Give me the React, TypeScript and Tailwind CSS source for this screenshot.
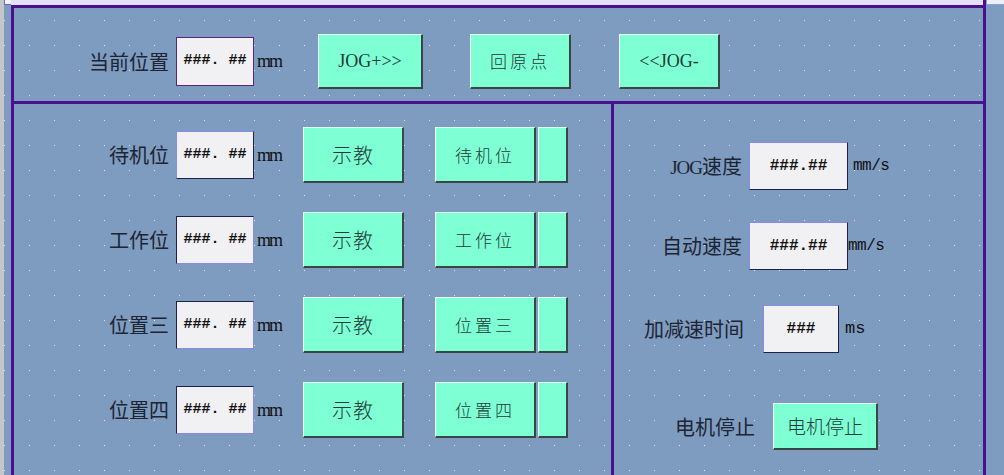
import React from "react";

const cjk = "font-['Noto_Sans_CJK_SC',sans-serif]";
const serif = "font-['Liberation_Serif','Noto_Sans_CJK_SC',serif]";
const mono = "font-['Liberation_Mono','Noto_Sans_CJK_SC',monospace]";

const Btn: React.FC<{ className?: string; children?: React.ReactNode }> = ({ className = "", children }) => (
  <div
    className={
      "flex items-center justify-center shrink-0 bg-[#7effd4] border-t border-l border-t-[#e6fff6] border-l-[#f4fffa] border-b-2 border-r-2 border-b-[#3a4644] border-r-[#3a4644] text-[#1f3b37] " +
      className
    }
  >
    {children}
  </div>
);

const Field: React.FC<{ className?: string; sunken?: boolean; text?: string; textClass?: string }> = ({
  className = "",
  sunken = false,
  text = "###.##",
  textClass = "text-[16px]",
}) => (
  <div
    className={
      "flex items-center justify-center shrink-0 bg-[#f1f0f3] border text-[#111] font-bold " +
      (sunken
        ? "border-t-[#20204e] border-l-[#20204e] border-b-[#8a8ae6] border-r-[#8a8ae6] "
        : "border-t-[#8a8ae6] border-l-[#8a8ae6] border-b-[#20204e] border-r-[#20204e] ") +
      mono +
      " " +
      textClass +
      " " +
      className
    }
  >
    <span className="whitespace-pre">{text}</span>
  </div>
);

const rows = [
  { label: "待机位", sunken: false },
  { label: "工作位", sunken: true },
  { label: "位置三", sunken: true },
  { label: "位置四", sunken: true },
];

export default function App() {
  return (
    <div
      className={
        "w-[1004px] h-[475px] overflow-hidden flex bg-[#7e9cc0] bg-[image:linear-gradient(to_right,transparent_1px,#7e9cc0_1px),linear-gradient(to_bottom,#e2e9f3_1px,#7e9cc0_1px)] bg-[length:25px_25px] bg-[position:4px_20px] " +
        cjk
      }
    >
      <div className="w-[4px] h-full shrink-0 bg-[#c6c6ca]" />
      <div className="flex-1 flex flex-col">
        {/* top strip */}
        <div className="h-[5px] shrink-0 flex bg-[#e4e0f5]">
          <div className="w-[7px] h-full border-l border-b border-[#5b6fd0] bg-[#f6f4fd]" />
          <div className="flex-1" />
          <div className="w-[3px] h-full bg-[#4a1090]" />
          <div className="w-[18px] h-full border-l border-b border-[#8fa0d8] bg-[#eceffc]" />
        </div>

        {/* frame */}
        <div className="ml-[7px] w-[975px] flex-1 flex flex-col border-[3px] border-b-0 border-[#4a1090]">
          {/* current position */}
          <div className="h-[96px] shrink-0 border-b-[3px] border-[#4a1090]">
            <div className="mt-[26px] h-[55px] flex items-center pl-[75px]">
              <span className="w-[80px] text-[20px] leading-none text-[#1d2433]">当前位置</span>
              <Field className="ml-[7px] w-[78px] h-[49px] !border-[#5a2380]" text="###. ##" textClass="text-[15px]" />
              <span className={"w-[64px] pl-[3px] text-[18px] tracking-[-2px] text-[#111] " + serif}>mm</span>
              <Btn className={"w-[105px] h-[55px] text-[18px] " + serif}>JOG+&gt;&gt;</Btn>
              <Btn className="ml-[47px] w-[101px] h-[55px] text-[17px] tracking-[3px] font-light">回原点</Btn>
              <Btn className={"ml-[48px] w-[101px] h-[55px] text-[18px] " + serif}>&lt;&lt;JOG-</Btn>
            </div>
          </div>

          <div className="flex-1 flex">
            {/* positions */}
            <div className="w-[600px] shrink-0 border-r-[3px] border-[#4a1090] pt-[23px] flex flex-col gap-[29px]">
              {rows.map((r) => (
                <div key={r.label} className="h-[56px] flex items-center">
                  <span className="w-[155px] text-right text-[20px] leading-none text-[#1d2433]">{r.label}</span>
                  <Field className="ml-[7px] w-[78px] h-[48px]" sunken={r.sunken} text="###. ##" textClass="text-[15px]" />
                  <span className={"w-[49px] pl-[3px] text-[18px] tracking-[-2px] text-[#111] " + serif}>mm</span>
                  <Btn className="w-[101px] h-[56px] text-[20px] tracking-[1px] font-light">示教</Btn>
                  <Btn className="ml-[31px] w-[101px] h-[56px] text-[17px] tracking-[3px] font-light">{r.label}</Btn>
                  <Btn className="ml-[2px] w-[30px] h-[56px]" />
                </div>
              ))}
            </div>

            {/* speeds */}
            <div className="flex-1 flex flex-col">
              <div className="mt-[38px] h-[48px] flex items-center">
                <span className="w-[128px] text-right text-[20px] leading-none text-[#1d2433]">
                  <span className={"text-[19px] tracking-[-1px] " + serif}>JOG</span>速度
                </span>
                <Field className="ml-[7px] w-[99px] h-[48px]" />
                <span className={"pl-[5px] text-[16px] tracking-[-0.5px] text-[#111] " + mono}>mm/s</span>
              </div>
              <div className="mt-[32px] h-[48px] flex items-center">
                <span className="w-[128px] text-right text-[20px] leading-none text-[#1d2433]">自动速度</span>
                <Field className="ml-[7px] w-[99px] h-[48px]" />
                <span className={"text-[16px] tracking-[-0.5px] text-[#111] " + mono}>mm/s</span>
              </div>
              <div className="mt-[35px] h-[48px] flex items-center">
                <span className="w-[130px] text-right text-[20px] leading-none text-[#1d2433]">加减速时间</span>
                <Field className="ml-[19px] w-[76px] h-[48px]" text="###" />
                <span className={"pl-[6px] text-[17px] text-[#111] " + mono}>ms</span>
              </div>
              <div className="mt-[50px] h-[47px] flex items-center">
                <span className="w-[141px] text-right text-[20px] leading-none text-[#1d2433]">电机停止</span>
                <Btn className="ml-[18px] w-[105px] h-[47px] text-[19px] font-light">电机停止</Btn>
              </div>
            </div>
          </div>
        </div>
      </div>
    </div>
  );
}
